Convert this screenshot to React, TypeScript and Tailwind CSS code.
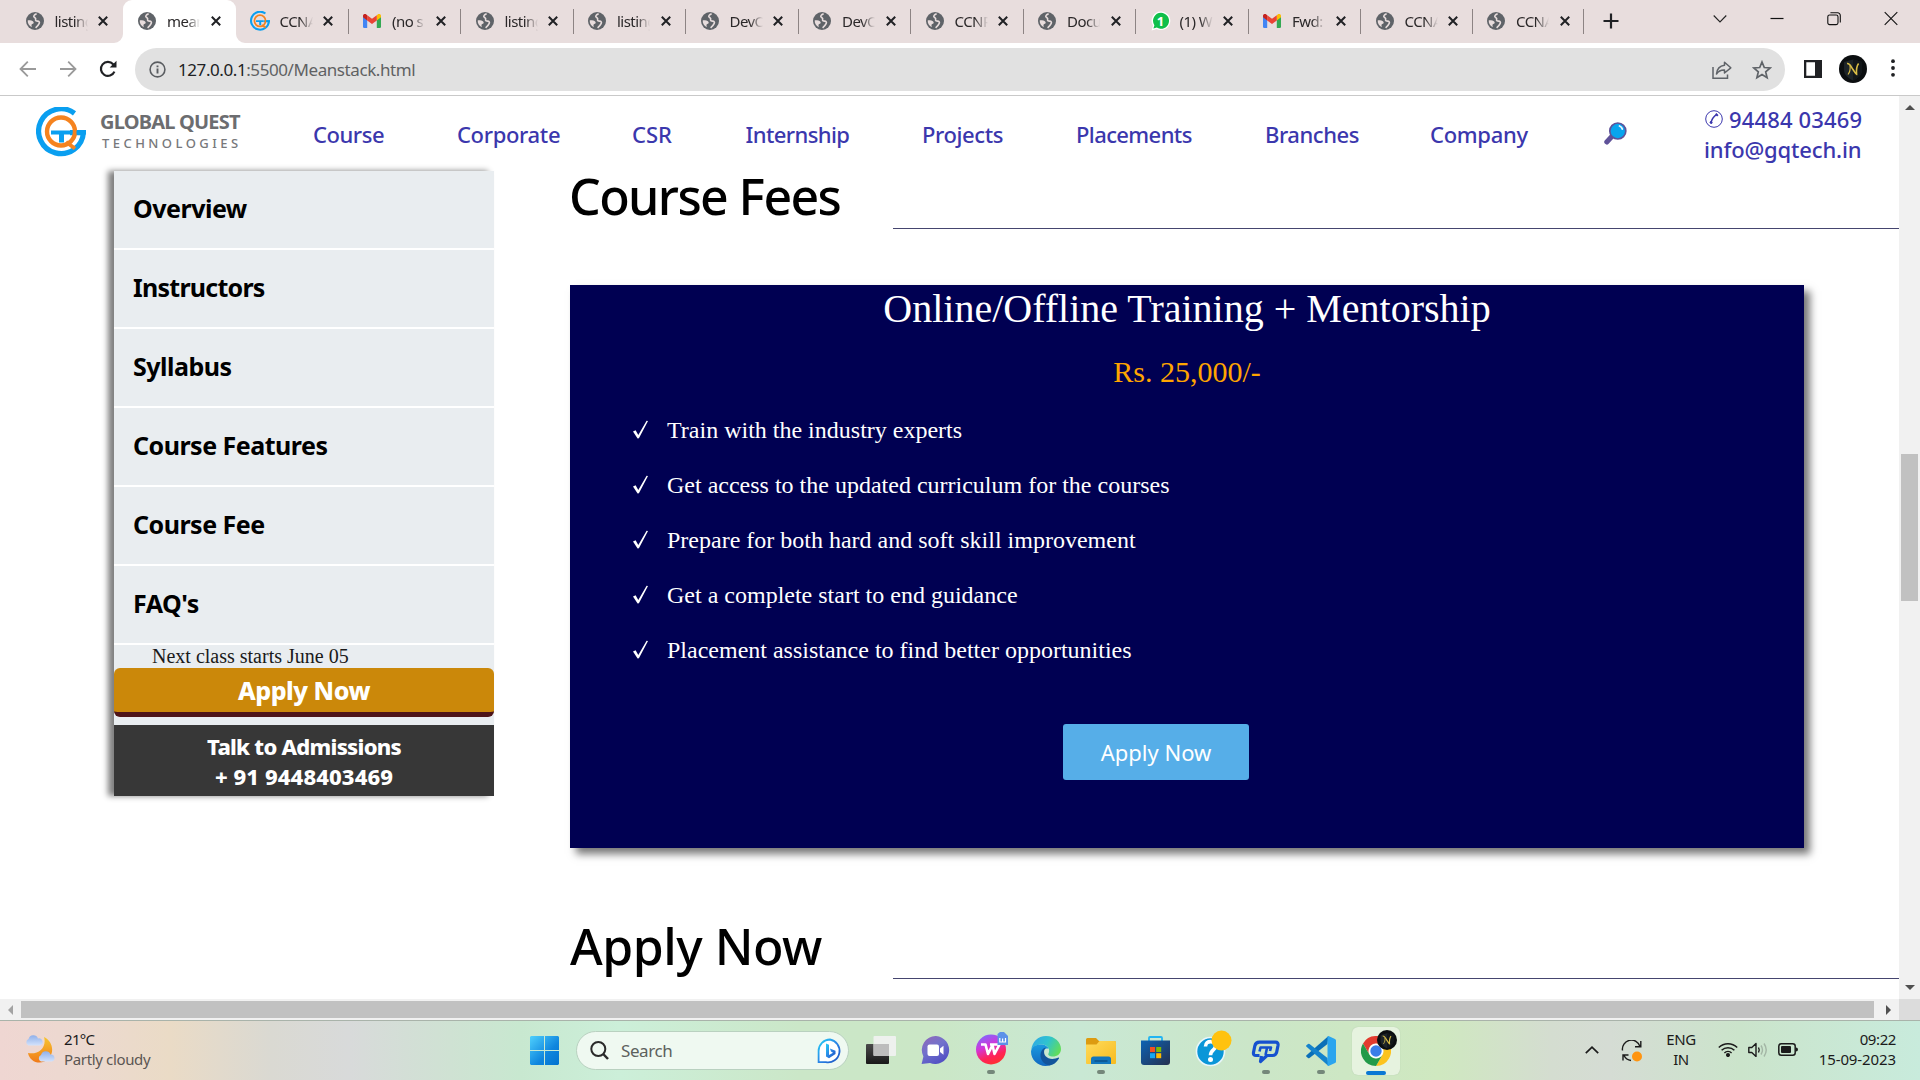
import React from "react";

type IconProps = { className?: string };

function GlobeIcon({ className }: IconProps) {
  return (
    <svg viewBox="0 0 18 18" className={className}>
      <circle cx="9" cy="9" r="9" fill="#5f6368" />
      <path d="M1.7 8.4 C3.6 8.2 6.4 8.6 7.4 9.8 C8.2 10.8 7.4 11.8 6.2 12 C5.2 12.3 5.400 13.6 5.8 15.2 C3.2 13.8 1.6 11.4 1.7 8.4 Z" fill="#e8dddd" />
      <path d="M10.6 1.9 C8.2 2.4 7.200 4.2 8.2 5.2 C9.400 6 10.2 6.200 9.600 7.6 C9.200 8.8 10.4 9.100 11.6 9.100 C13.2 9.200 13.8 10.2 13.200 11.4 C12.6 12.6 12 14 9.6 15.900" fill="none" stroke="#e8dddd" strokeWidth="1.6" />
    </svg>
  );
}

function GqMark({ className }: IconProps) {
  return (
    <svg viewBox="0 0 50 50" className={className}>
      <path d="M38.5 6.3 A22.4 22.4 0 1 0 47.4 25.6 H34" fill="none" stroke="#0a9ff0" strokeWidth="5.2" />
      <circle cx="25" cy="24.5" r="14" fill="none" stroke="#f5831f" strokeWidth="4.4" />
      <path d="M30 35 L39 41.500" stroke="#f5831f" strokeWidth="4" />
      <path d="M15 25.400 H34 M40.500 25.400 H50" stroke="#0a9ff0" strokeWidth="4" />
      <path d="M25.500 26 V35.500" stroke="#0a9ff0" strokeWidth="5" />
    </svg>
  );
}

function GmailIcon({ className }: IconProps) {
  return (
    <svg viewBox="0 0 18 14" className={className}>
      <path d="M0 2.5 V12.8 A1.2 1.2 0 0 0 1.2 14 H4.2 V5.6 Z" fill="#4285f4" />
      <path d="M18 2.5 V12.8 A1.2 1.2 0 0 1 16.8 14 H13.8 V5.6 Z" fill="#34a853" />
      <path d="M13.8 1.2 V6.4 L18 3.2 V1.8 C18 .2 16.2 -.6 15 .3 Z" fill="#fbbc04" />
      <path d="M4.2 6.4 V1.2 L9 4.8 L13.8 1.2 V6.4 L9 10 Z" fill="#ea4335" />
      <path d="M0 1.8 V3.2 L4.2 6.4 V1.2 L3 .3 C1.8 -.6 0 .2 0 1.8 Z" fill="#c5221f" />
    </svg>
  );
}

function WhatsAppIcon({ className }: IconProps) {
  return (
    <div className={`relative ${className ?? ""}`}>
      <svg viewBox="0 0 20 20" className="size-full">
        <path d="M10 .5 A9.3 9.3 0 1 1 5.6 18 L.6 19.4 L2 14.6 A9.3 9.3 0 0 1 10 .5 Z" fill="#fff" />
        <path d="M10 1.8 A8 8 0 1 1 5.8 16.6 L2.4 17.6 L3.4 14.2 A8 8 0 0 1 10 1.8 Z" fill="#0fbf4a" />
      </svg>
      <span className="absolute inset-0 text-center text-[13px] leading-[20px] font-bold text-white">1</span>
    </div>
  );
}

function TabClose() {
  return (
    <svg viewBox="0 0 10 10" className="size-[10px] shrink-0">
      <path d="M.8 .8 L9.2 9.2 M9.2 .8 L.8 9.2" stroke="#202124" strokeWidth="2" />
    </svg>
  );
}

type TabKind = "globe" | "gq" | "gmail" | "wa";

const tabs: { kind: TabKind; title: string }[] = [
  { kind: "globe", title: "listing" },
  { kind: "globe", title: "mean" },
  { kind: "gq", title: "CCNA" },
  { kind: "gmail", title: "(no s" },
  { kind: "globe", title: "listing" },
  { kind: "globe", title: "listing" },
  { kind: "globe", title: "DevO" },
  { kind: "globe", title: "DevO" },
  { kind: "globe", title: "CCNP" },
  { kind: "globe", title: "Docu" },
  { kind: "wa", title: "(1) W" },
  { kind: "gmail", title: "Fwd:" },
  { kind: "globe", title: "CCNA" },
  { kind: "globe", title: "CCNA" },
];

function TabIcon({ kind }: { kind: TabKind }) {
  if (kind === "gq") return <GqMark className="-ml-px size-[20px]" />;
  if (kind === "gmail") return <GmailIcon className="h-[14px] w-[18px]" />;
  if (kind === "wa") return <WhatsAppIcon className="size-[20px]" />;
  return <GlobeIcon className="size-[18px]" />;
}

function TabStrip() {
  return (
    <div className="flex h-[43px] bg-[#e8dddd] pl-[10.5px]">
      {tabs.map((tab, i) => {
        const active = i === 1;
        return (
          <div
            key={i}
            className={`relative flex shrink-0 items-center pb-px pl-[15px] ${i > 11 ? "w-[111.5px]" : "w-[112.5px]"} ${active ? "rounded-t-[9px] bg-white" : ""}`}
          >
            <div className="flex w-[20px] shrink-0 items-center">
              <TabIcon kind={tab.kind} />
            </div>
            <div className="ml-[9px] w-[33px] overflow-hidden text-[15px] leading-[20px] tracking-[-0.55px] whitespace-nowrap text-[#2b2829] [mask-image:linear-gradient(to_right,black_60%,transparent_100%)]">
              {tab.title}
            </div>
            <div className="ml-[10.5px]">
              <TabClose />
            </div>
            {i > 1 && <div className="absolute top-[9px] -right-[0.5px] h-[25px] w-px bg-[#8d8484]" />}
            {active && (
              <>
                <svg viewBox="0 0 9 9" className="absolute bottom-0 -left-[9px] size-[9px]"><path d="M9 0 V9 H0 A9 9 0 0 0 9 0 Z" fill="#fff" /></svg>
                <svg viewBox="0 0 9 9" className="absolute -right-[9px] bottom-0 size-[9px]"><path d="M0 0 V9 H9 A9 9 0 0 1 0 0 Z" fill="#fff" /></svg>
              </>
            )}
          </div>
        );
      })}
      <svg viewBox="0 0 16 16" className="mt-[13px] ml-[19.5px] size-[16px]"><path d="M8 .5 V15.5 M.5 8 H15.5" stroke="#202124" strokeWidth="2.2" /></svg>
      <div className="mt-[11px] mr-[22px] ml-auto flex items-start gap-[43px]">
        <svg viewBox="0 0 14 16" className="h-[16px] w-[14px]"><path d="M.7 4.5 L7 11 L13.3 4.5" fill="none" stroke="#222" strokeWidth="1.1" /></svg>
        <svg viewBox="0 0 14 16" className="h-[16px] w-[14px]"><path d="M.5 7.5 H13.5" stroke="#111" strokeWidth="1.2" /></svg>
        <svg viewBox="0 0 14 16" className="h-[16px] w-[14px]" fill="none" stroke="#111" strokeWidth="1.1"><rect x=".8" y="4" width="10.2" height="9.6" rx="1.8" /><path d="M3.4 1.8 H10.6 A2.6 2.6 0 0 1 13.3 4.4 V11.4" /></svg>
        <svg viewBox="0 0 14 16" className="h-[16px] w-[14px]"><path d="M.7 1.2 L13.3 13.8 M13.3 1.2 L.7 13.8" stroke="#111" strokeWidth="1.1" /></svg>
      </div>
    </div>
  );
}

function Avatar({ className }: IconProps) {
  return (
    <svg viewBox="0 0 28 28" className={className}>
      <circle cx="14" cy="14" r="14" fill="#0b0e10" />
      <path d="M5 7 L14 4.5 L23 7 V15 C23 20 18.5 23.5 14 25.5 C9.5 23.5 5 20 5 15 Z" fill="#1d2428" />
      <path d="M14 4.5 L23 7 V15 C23 20 18.5 23.5 14 25.5 Z" fill="#12171a" />
      <path d="M8 8.5 C11 8 11.5 11 14 14.5 C16 17.5 17 19.5 17.6 19.5 C17.2 15 17.6 11 19.6 8.5" fill="none" stroke="#d9bd45" strokeWidth="1.6" />
      <path d="M11 10.5 C11.5 14 11 17 9 19.5" fill="none" stroke="#d9bd45" strokeWidth="1.1" />
    </svg>
  );
}

function Toolbar() {
  return (
    <div className="flex h-[53px] items-start border-b border-[#c9c9c9] bg-white pt-[5px]">
      <div className="flex h-[43px] w-[135px] shrink-0 items-center pl-[18.5px]">
        <svg viewBox="0 0 18 18" className="-mt-px size-[18px]" fill="none" stroke="#9a9a9a" strokeWidth="1.8"><path d="M17 9 H1.6 M8.8 1.6 L1.5 9 L8.8 16.4" /></svg>
        <svg viewBox="0 0 18 18" className="-mt-px ml-[22px] size-[18px]" fill="none" stroke="#9a9a9a" strokeWidth="1.8"><path d="M1 9 H16.4 M9.2 1.6 L16.5 9 L9.2 16.4" /></svg>
        <svg viewBox="0 0 18 18" className="-mt-px ml-[22px] size-[18px]"><path d="M15.4 11.6 A7 7 0 1 1 14.2 4.3 L16 6.1" fill="none" stroke="#202124" strokeWidth="2.2" /><path d="M17.5 .8 V7.6 H10.7 Z" fill="#202124" /></svg>
      </div>
      <div className="flex h-[43px] w-[1650px] shrink-0 items-center rounded-full bg-[#e1e1e1] pl-[14px]">
        <svg viewBox="0 0 17 17" className="size-[17px]"><circle cx="8.5" cy="8.5" r="7.4" fill="none" stroke="#5a5d61" strokeWidth="1.6" /><path d="M8.5 7.5 V12.5 M8.5 4.4 V6.2" stroke="#5a5d61" strokeWidth="1.9" /></svg>
        <div className="ml-[12px] text-[17px] leading-[24px] tracking-[-0.42px] text-[#5f6163]">
          <span className="text-[#202124]">127.0.0.1</span>:5500/Meanstack.html
        </div>
        <svg viewBox="0 0 20 20" className="ml-auto size-[20px]" fill="none" stroke="#5f6368" strokeWidth="1.5"><path d="M1 7 V18.2 H15.5 V14.5" /><path d="M12.5 2.2 L18.8 7.8 L12.5 13 V10 C9 9.8 6.5 11 4.5 14 C5 9 8 5.8 12.5 5.3 Z" strokeLinejoin="round" /></svg>
        <svg viewBox="0 0 20 20" className="mr-[13px] ml-[20px] size-[20px]"><path d="M10 2 L12.3 7.5 L18.2 8 L13.7 11.9 L15.1 17.7 L10 14.6 L4.9 17.7 L6.3 11.9 L1.8 8 L7.7 7.5 Z" fill="none" stroke="#5f6368" strokeWidth="1.7" /></svg>
      </div>
      <svg viewBox="0 0 18 18" className="mt-[12px] ml-[19px] size-[18px]"><path d="M0 0 H18 V18 H0 Z M2.3 2.3 V15.7 H11 V2.3 Z" fill="#202124" fillRule="evenodd" /></svg>
      <Avatar className="mt-[7px] ml-[17px] size-[28px]" />
      <svg viewBox="0 0 4 18" className="mt-[11px] ml-[23.5px] h-[18px] w-[4px]" fill="#202124"><circle cx="2" cy="2.2" r="1.9" /><circle cx="2" cy="9" r="1.9" /><circle cx="2" cy="15.8" r="1.9" /></svg>
    </div>
  );
}

const navItems = [
  { label: "Course", cls: "w-[144px] tracking-[-0.45px]" },
  { label: "Corporate", cls: "w-[175px] tracking-[-0.35px]" },
  { label: "CSR", cls: "w-[113.5px] tracking-[0px]" },
  { label: "Internship", cls: "w-[176.5px] tracking-[-0.6px]" },
  { label: "Projects", cls: "w-[154px] tracking-[-0.4px]" },
  { label: "Placements", cls: "w-[189px] tracking-[-0.6px]" },
  { label: "Branches", cls: "w-[165px] tracking-[-0.45px]" },
  { label: "Company", cls: "w-[174px] tracking-[-0.3px]" },
];

function SiteHeader() {
  return (
    <div className="relative flex h-[75px] shrink-0 items-center text-[22px] leading-[30px] font-medium text-[#3b37ad]">
      <GqMark className="-mt-[4px] ml-[36px] size-[50px] shrink-0" />
      <div className="-mt-[7px] ml-[14px] w-[213px] shrink-0 whitespace-nowrap">
        <div className="text-[20px] leading-[25px] font-bold tracking-[-0.8px] text-[#6c6d70]">GLOBAL QUEST</div>
        <div className="pl-[2px] text-[13px] leading-[18px] font-medium tracking-[3.45px] text-[#77787b]">TECHNOLOGIES</div>
      </div>
      {navItems.map((n) => (
        <a key={n.label} className={`shrink-0 ${n.cls}`}>{n.label}</a>
      ))}
      <svg viewBox="0 0 23 23" className="size-[23px] shrink-0">
        <path d="M2.8 20 L8.5 13.8" stroke="#5f5299" strokeWidth="5" strokeLinecap="round" />
        <circle cx="13.8" cy="9" r="8" fill="#08a4ee" stroke="#5f5299" strokeWidth="1.7" />
        <path d="M15.5 4 C17 4.6 18 5.6 18.3 7" fill="none" stroke="#e8f6ff" strokeWidth="1.8" strokeLinecap="round" />
      </svg>
      <div className="ml-[77px] shrink-0 whitespace-nowrap">
        <div className="flex items-center">
          <svg viewBox="0 0 18 18" className="ml-px size-[18px]" fill="none" stroke="#3b37ad"><circle cx="9" cy="9" r="8.3" strokeWidth="1" /><path d="M5.8 13.6 C6.5 9.5 8.6 6.4 12 4.4" strokeWidth="1.6" /><path d="M4.9 11.8 L7.3 13.2 M10.8 3.6 L12.8 5.8" strokeWidth="2" /></svg>
          <span className="ml-[6px] tracking-[0.15px]">94484 03469</span>
        </div>
        <div className="tracking-[-0.15px]">info@gqtech.in</div>
      </div>
    </div>
  );
}

const sections = ["Overview", "Instructors", "Syllabus", "Course Features", "Course Fee", "FAQ's"];

function Sidebar() {
  return (
    <div className="ml-[114px] h-[625px] w-[380px] shrink-0 bg-[#e9edf0] shadow-[-6px_0_6px_#808080]">
      {sections.map((s) => (
        <div key={s} className={`h-[79px] border-b-2 border-white pl-[19px] text-[25px] leading-[75px] font-bold text-black ${s === "Instructors" ? "tracking-[-0.75px]" : "tracking-[-0.5px]"}`}>{s}</div>
      ))}
      <div className="pl-[38px] font-['Liberation_Serif',serif] text-[20px] leading-[23px] text-[#1a1a1a]">Next class starts June 05</div>
      <div className="h-[49px] rounded-[6px] border-b-[5px] border-[#4d1418] bg-[#cb880a] text-center text-[25px] leading-[44px] font-extrabold tracking-[-0.5px] text-white">Apply Now</div>
      <div className="mt-[8px] h-[71px] bg-[#373737] pt-[6px] text-center text-[22px] leading-[30px] font-extrabold text-white">
        <div className="tracking-[-0.75px]">Talk to Admissions</div>
        <div className="tracking-[0.1px]">+ 91 9448403469</div>
      </div>
    </div>
  );
}

const perks = [
  "Train with the industry experts",
  "Get access to the updated curriculum for the courses",
  "Prepare for both hard and soft skill improvement",
  "Get a complete start to end guidance",
  "Placement assistance to find better opportunities",
];

function SectionHeading({ title, cls }: { title: string; cls: string }) {
  return (
    <div className="flex h-[68px]">
      <h2 className={`w-[323px] shrink-0 text-[50px] leading-[70px] font-medium whitespace-nowrap text-black ${cls}`}>{title}</h2>
      <div className="h-px flex-1 self-end bg-[#45456f]" />
    </div>
  );
}

function MainColumn() {
  return (
    <div className="-mt-[10px] ml-[76px] flex-1">
      <SectionHeading title="Course Fees" cls="-indent-[1px] tracking-[-1.6px]" />
      <div className="mt-[56px] h-[563px] w-[1234px] bg-[#000052] font-['Liberation_Serif',serif] text-white shadow-[6px_6px_8px_#777]">
        <div className="text-center text-[40px] leading-[47px]">Online/Offline Training + Mentorship</div>
        <div className="mt-[22px] text-center text-[30px] leading-[35px] text-[#ffa500]">Rs. 25,000/-</div>
        <ul className="mt-[28px] flex flex-col gap-[28px] pl-[62px] text-[24px] leading-[27px]">
          {perks.map((p) => (
            <li key={p} className="flex items-center">
              <svg viewBox="0 0 17 19" className="-mt-[3px] h-[19px] w-[17px]"><path d="M1 11.5 L3.6 10.2 L6.3 15 L14.6 .8 L16 1 L6.9 18.2 L5.6 18.4 Z" fill="#fff" /></svg>
              <span className="ml-[18px]">{p}</span>
            </li>
          ))}
        </ul>
        <button className="mt-[60px] ml-[493px] block h-[56px] w-[186px] rounded-[3px] bg-[#56aee8] font-['Noto_Sans',sans-serif] text-[22px] leading-[57px]">Apply Now</button>
      </div>
      <div className="h-[63px]" />
      <SectionHeading title="Apply Now" cls="tracking-[-0.5px]" />
    </div>
  );
}

function Dot() {
  return <div className="absolute bottom-[6px] left-1/2 h-[4px] w-[8px] -translate-x-1/2 rounded-full bg-[#74877a]" />;
}

function Cell({ children, dot }: { children: React.ReactNode; dot?: boolean }) {
  return (
    <div className="relative flex h-full w-[55px] shrink-0 items-center justify-center">
      {children}
      {dot && <Dot />}
    </div>
  );
}

function Taskbar() {
  return (
    <div className="flex h-[60px] items-center border-t border-[#a9b3aa] bg-[linear-gradient(to_right,#efd6d2_0px,#ecd9cf_90px,#eadbc6_170px,#dad9d2_270px,#d8dada_350px,#cfe2d3_450px,#c8e8d0_520px,#ccefd9_620px,#cbe7c8_800px,#cbe7c6_930px,#c9e8d4_1080px,#cbe6c8_1250px,#cfe8c0_1440px,#d4ddd0_1550px,#d5dcd4_1610px,#cbe4cb_1740px,#c8ebdc_1920px)] text-[15px] text-[#1b1b1b]">
      <div className="flex w-[517px] shrink-0 items-center pl-[25px]">
        <svg viewBox="0 0 30 30" className="-mt-[4px] size-[30px]">
          <defs>
            <linearGradient id="moon" x1="0" y1="0" x2="0" y2="1"><stop offset="0" stopColor="#f7c52e" /><stop offset="1" stopColor="#f07a1a" /></linearGradient>
            <linearGradient id="cloud" x1="0" y1="0" x2="0" y2="1"><stop offset="0" stopColor="#8fb0ea" /><stop offset="1" stopColor="#d3e2fb" /></linearGradient>
          </defs>
          <path d="M19 3 C27 7 30 17 24 24 C17 32 5 29 3 19 C14 21 22 13 19 3 Z" fill="url(#moon)" />
          <path d="M3.5 11.5 A3.500 3.500 0 0 1 3.5 5 A5 5 0 0 1 13 4.5 A3.6 3.6 0 0 1 15 11.5 Z" fill="url(#cloud)" />
          <path d="M16 27.5 A3.5 3.5 0 0 1 16 21 A5 5 0 0 1 25.5 20.5 A3.6 3.6 0 0 1 27 27.5 Z" fill="url(#cloud)" />
        </svg>
        <div className="-mt-[4px] ml-[9px] leading-[20px]">
          <div className="tracking-[-0.7px]">21°C</div>
          <div className="tracking-[-0.35px] text-[#5b5653]">Partly cloudy</div>
        </div>
      </div>
      <Cell>
        <svg viewBox="0 0 29 29" className="size-[29px]">
          <defs><linearGradient id="win" x1="0" y1="0" x2="1" y2="1"><stop offset="0" stopColor="#4fd0fd" /><stop offset=".6" stopColor="#0f86de" /><stop offset="1" stopColor="#0272cf" /></linearGradient></defs>
          <path d="M1 0 H14 V14 H0 V1 Z M15 0 H28 L29 1 V14 H15 Z M0 15 H14 V29 H1 L0 28 Z M15 15 H29 V28 L28 29 H15 Z" fill="url(#win)" />
        </svg>
      </Cell>
      <div className="mr-[4px] ml-[4px] flex h-[39px] w-[273px] shrink-0 items-center rounded-full border border-[#b9d1c0] bg-[#eff9f1] pl-[13px] text-[17px] text-[#5c615d]">
        <svg viewBox="0 0 19 19" className="size-[19px]" fill="none" stroke="#2a2a2a" strokeWidth="2"><circle cx="8.3" cy="8" r="7" /><path d="M13.2 13 L18 18" strokeWidth="2.5" /></svg>
        <span className="ml-[12px] tracking-[-0.4px]">Search</span>
        <svg viewBox="0 0 26 26" className="mr-[5px] ml-auto size-[26px]">
          <defs><linearGradient id="bing" x1="0" y1="0" x2="1" y2="1"><stop offset="0" stopColor="#25d0f5" /><stop offset=".5" stopColor="#2a85e6" /><stop offset="1" stopColor="#1a4fc0" /></linearGradient></defs>
          <path d="M13 1.5 A11.5 11.5 0 1 1 9 24.2 H1.6 V13 A11.5 11.5 0 0 1 13 1.5 Z" fill="#fff" stroke="url(#bing)" strokeWidth="1.8" />
          <path d="M9 5.5 L12 6.7 V17 L16 14.8 L14 13.5 L12.9 10.5 L18.5 12.8 V16 L12 20.3 L9 18.5 Z" fill="url(#bing)" />
        </svg>
      </div>
      <Cell>
        <svg viewBox="0 0 30 28" className="-mt-[2px] h-[28px] w-[30px]">
          <defs><linearGradient id="tv" x1="0" y1="0" x2="0" y2="1"><stop offset="0" stopColor="#4a4a4a" /><stop offset="1" stopColor="#191919" /></linearGradient></defs>
          <rect y="8" width="23" height="20" rx="1" fill="url(#tv)" />
          <rect x="7.5" width="22.5" height="20" rx="1" fill="#f2f2f2" opacity=".9" />
          <path d="M7.5 8 H23 V20 H8.5 Q7.5 20 7.5 19 Z" fill="#bdbdbd" />
        </svg>
      </Cell>
      <Cell>
        <svg viewBox="0 0 29 28" className="-mt-[2px] h-[28px] w-[29px]">
          <defs><linearGradient id="chat" x1="0" y1="0" x2=".6" y2="1"><stop offset="0" stopColor="#9467b8" /><stop offset=".5" stopColor="#7272cc" /><stop offset="1" stopColor="#5350c4" /></linearGradient></defs>
          <path d="M15 0 A14 14 0 1 1 9 27 L.6 28 L2.4 20.5 A14 14 0 0 1 15 0 Z" fill="url(#chat)" />
          <rect x="6.5" y="8.5" width="11.5" height="11.5" rx="2" fill="#fff" />
          <path d="M19 12.5 L22.500 9.8 V18.8 L19 16 Z" fill="#fff" />
        </svg>
      </Cell>
      <Cell dot>
        <svg viewBox="0 0 32 33" className="mb-[4px] ml-[2px] h-[33px] w-[32px]">
          <defs><linearGradient id="wps" x1=".2" y1="0" x2=".6" y2="1"><stop offset="0" stopColor="#7c6bff" /><stop offset=".4" stopColor="#d236d8" /><stop offset=".75" stopColor="#ff2358" /><stop offset="1" stopColor="#ff3030" /></linearGradient></defs>
          <circle cx="15" cy="17.5" r="15" fill="url(#wps)" />
          <path d="M5 12.5 H9.5 L12 22 L16.5 13 L18.500 22 L23.500 12.5 H14" fill="none" stroke="#fff" strokeWidth="2.6" strokeLinejoin="round" />
          <path d="M21.5 2 L24 0 H28 L32 4 V13 H21.5 Z" fill="#5c91e8" />
          <path d="M23.8 6 V10 H29.5 V6 M26.6 6.5 V10" fill="none" stroke="#fff" strokeWidth="1.2" />
        </svg>
      </Cell>
      <Cell>
        <svg viewBox="0 0 30 30" className="size-[30px]">
          <defs>
            <linearGradient id="edgeTop" x1="0" y1=".2" x2="1" y2=".6"><stop offset="0" stopColor="#2fa8e6" /><stop offset=".5" stopColor="#2fc3cf" /><stop offset="1" stopColor="#62dd5a" /></linearGradient>
            <linearGradient id="edgeMid" x1="0" y1="0" x2="0" y2="1"><stop offset="0" stopColor="#1a9be0" /><stop offset="1" stopColor="#1168c0" /></linearGradient>
          </defs>
          <path d="M.3 14 C1 6 7 0 15 0 C24 0 30 6.5 30 13 C30 18 26 20.5 22 20.5 C18.5 20.5 16.5 19 17.5 17.5 C19.5 14 17 9.5 12 8.6 C7 7.8 2 10 .3 14 Z" fill="url(#edgeTop)" />
          <path d="M0 15.5 C.5 10.5 6 7.8 11.5 8.6 C14.5 9 16.5 10.6 17.6 12.5 C13.5 11.8 10.5 15 11 19.5 C11.6 24.5 16 29 19.5 29 C10 32.5 0 25.5 0 15.5 Z" fill="url(#edgeMid)" />
          <path d="M9.5 18.5 C10 14.5 12.5 11.8 15 11.6 C11.5 15 13 20.5 17.5 22.3 C21 23.6 24.5 22.8 27.6 21.6 C28 21.5 28.2 22 28 22.4 C25.5 26.5 22 29 18.5 29.5 C13.5 29 9 24 9.5 18.5 Z" fill="#12559c" />
        </svg>
      </Cell>
      <Cell dot>
        <svg viewBox="0 0 30 26" className="h-[26px] w-[30px]">
          <defs><linearGradient id="folder" x1="0" y1="0" x2="1" y2="1"><stop offset="0" stopColor="#ffdb5c" /><stop offset="1" stopColor="#f7bb1e" /></linearGradient></defs>
          <path d="M0 1.5 Q0 0 1.5 0 H10 L13 3 H28.5 Q30 3 30 4.5 V12 H0 Z" fill="#dd9b10" />
          <path d="M0 6.5 H10.500 L13.5 3 H28.5 Q30 3 30 4.5 V25 Q30 26 29 26 H1 Q0 26 0 25 Z" fill="url(#folder)" />
          <path d="M5 26 V21 Q5 18.5 7.5 18.5 H22.5 Q25 18.5 25 21 V26 Z" fill="#1276bd" />
          <path d="M8.5 23 H21.5" stroke="#0a4c82" strokeWidth="1.3" />
        </svg>
      </Cell>
      <Cell>
        <svg viewBox="0 0 29 29" className="size-[29px]">
          <defs><linearGradient id="store" x1="0" y1="0" x2="1" y2="1"><stop offset="0" stopColor="#0d63b4" /><stop offset="1" stopColor="#25304f" /></linearGradient></defs>
          <path d="M8 5.5 V2 Q8 1 9 1 H20 Q21 1 21 2 V5.5" fill="none" stroke="#22b4f2" strokeWidth="1.8" />
          <path d="M0 4.5 H29 V26 Q29 29 26 29 H3 Q0 29 0 26 Z" fill="url(#store)" />
          <path d="M9 11 H14 V16 H9 Z" fill="#f25022" /><path d="M15.2 11 H20.2 V16 H15.2 Z" fill="#7fba00" />
          <path d="M9 17.2 H14 V22.2 H9 Z" fill="#14a7f0" /><path d="M15.2 17.2 H20.2 V22.2 H15.2 Z" fill="#ffb900" />
        </svg>
      </Cell>
      <Cell>
        <svg viewBox="0 0 38 38" className="mb-[5px] ml-[6px] size-[38px] shrink-0">
          <circle cx="15.5" cy="22.5" r="14" fill="#0a96d8" stroke="#e9f6fa" strokeWidth="1.6" />
          <path d="M10.5 17.5 C10.5 10.5 21 11.5 20.5 17.5 C20.2 21 15.5 21 15.5 26.2" fill="none" stroke="#fff" strokeWidth="3.6" />
          <circle cx="15.5" cy="30.5" r="2.5" fill="#fff" />
          <circle cx="26.5" cy="11.5" r="10" fill="#ffc20f" />
        </svg>
      </Cell>
      <Cell dot>
        <svg viewBox="0 0 29 24" className="mt-[2px] h-[24px] w-[29px]" fill="none" strokeLinejoin="round">
          <path d="M8.5 15.5 H5 Q2 15.5 2.5 12.5 L3.8 6 Q4.6 2.2 8.5 2.2 H24.5 Q27.5 2.2 27 5.5 L25.7 12 Q25 15.5 21.5 15.5 H16 L9.5 21.5 L10.5 16" stroke="#1551cf" strokeWidth="3.2" />
          <path d="M8.5 11.5 L9.5 7.5 H20 L19 11 M16 8 L14.5 15" stroke="#1551cf" strokeWidth="2.6" />
        </svg>
      </Cell>
      <Cell dot>
        <svg viewBox="0 0 30 30" className="size-[30px]">
          <path d="M22.5 0 L21.5 8 L3.5 22 Q2.8 22.5 2 22 L.5 20.7 Q-.3 20 .5 19.2 Z" fill="#0a6fb8" />
          <path d="M22.5 30 L21.5 22 L3.5 8 Q2.8 7.5 2 8 L.5 9.3 Q-.3 10 .5 10.8 Z" fill="#1583cc" />
          <path d="M22.5 0 L29 3 Q30 3.5 30 4.6 V25.4 Q30 26.5 29 27 L22.5 30 Q21 30 21.5 28 V2 Q21 0 22.5 0 Z" fill="#2ba5ee" />
        </svg>
      </Cell>
      <Cell>
        <div className="relative flex size-[48px] items-center justify-center rounded-[6px] bg-[#e6f3df] shadow-[0_0_1px_#a9bfa5]">
          <svg viewBox="-15 -15 30 30" className="size-[30px]">
            <path d="M-13 -7.5 A15 15 0 0 1 13 -7.5 H0 A7.5 7.5 0 0 0 -6.5 3.75 Z" fill="#e23b2e" />
            <path d="M13 -7.5 A15 15 0 0 1 0 15 L6.5 3.75 A7.5 7.5 0 0 0 0 -7.5 Z" fill="#fcc31e" />
            <path d="M0 15 A15 15 0 0 1 -13 -7.5 L-6.5 3.75 A7.5 7.5 0 0 0 6.5 3.75 Z" fill="#229a48" />
            <circle r="7.2" fill="#fff" /><circle r="5.7" fill="#3a7de8" />
          </svg>
          <Avatar className="absolute top-[3px] right-[3px] size-[20px]" />
          <div className="absolute bottom-0 left-[14px] h-[4px] w-[20px] rounded-full bg-[#0a78d4]" />
        </div>
      </Cell>
      <div className="mr-[24px] ml-auto flex h-full items-center">
        <svg viewBox="0 0 14 8" className="-mt-[2px] h-[8px] w-[14px]"><path d="M.8 7.2 L7 1.2 L13.2 7.2" fill="none" stroke="#1b1b1b" strokeWidth="1.7" /></svg>
        <svg viewBox="0 0 22 22" className="ml-[22px] size-[22px]" fill="none" stroke="#1b1b1b" strokeWidth="1.4">
          <path d="M1.5 10.5 A9 9 0 0 1 19 6.5 M19.8 1 V6.8 H14" /><path d="M10 20.5 A9 9 0 0 1 3 15.5 M2 20.5 V15 H7.5" />
          <circle cx="16" cy="16.5" r="5" fill="#ff9410" stroke="none" />
        </svg>
        <div className="-mt-[3px] ml-[20px] w-[36px] text-center leading-[20px] tracking-[-0.4px]"><div>ENG</div><div>IN</div></div>
        <svg viewBox="0 0 20 15" className="-mt-[2px] ml-[19px] h-[15px] w-[20px]" fill="none" stroke="#1b1b1b" strokeWidth="1.5"><path d="M.8 5.5 A13 13 0 0 1 19.2 5.5" /><path d="M3.6 8.3 A9 9 0 0 1 16.4 8.3" /><path d="M6.4 11 A5.2 5.2 0 0 1 13.6 11" /><circle cx="10" cy="13" r="1.3" fill="#1b1b1b" /></svg>
        <svg viewBox="0 0 20 16" className="-mt-[2px] ml-[10px] h-[16px] w-[20px]" fill="none" stroke="#1b1b1b" strokeWidth="1.4"><path d="M.8 5.5 H3.8 L8 1.6 V14.4 L3.8 10.5 H.8 Z" strokeLinejoin="round" /><path d="M10.5 5.5 Q12 8 10.5 10.5" /><path d="M13 3.5 Q16 8 13 12.5 M16 1.5 Q20.5 8 16 14.5" stroke="#a3b5a5" /></svg>
        <svg viewBox="0 0 20 13" className="-mt-[2px] ml-[10px] h-[13px] w-[20px]"><rect x=".8" y=".8" width="16.4" height="11.4" rx="2.5" fill="none" stroke="#1b1b1b" strokeWidth="1.5" /><rect x="3" y="3" width="10" height="7" rx="1" fill="#1b1b1b" /><path d="M18 4.5 Q20 4.5 20 6.5 Q20 8.5 18 8.5 Z" fill="#1b1b1b" /></svg>
        <div className="-mt-[4px] ml-[19px] w-[79px] text-right leading-[20px] whitespace-nowrap"><div className="tracking-[-0.4px]">09:22</div><div className="tracking-[-0.1px]">15-09-2023</div></div>
      </div>
    </div>
  );
}

export default function App() {
  return (
    <div className="flex h-[1080px] w-[1920px] flex-col overflow-hidden bg-white font-['Noto_Sans',sans-serif]">
      <TabStrip />
      <Toolbar />
      <div className="flex h-[903px]">
        <div className="flex w-[1899px] flex-col overflow-hidden">
          <SiteHeader />
          <div className="flex flex-1">
            <Sidebar />
            <MainColumn />
          </div>
        </div>
        <div className="flex w-[21px] flex-col items-center bg-[#f1f1f1] pt-[9px]">
          <svg viewBox="0 0 10 5" className="h-[5px] w-[10px]"><path d="M0 5 L5 0 L10 5 Z" fill="#505050" /></svg>
          <div className="mt-[344px] h-[147px] w-[17px] bg-[#c1c1c1]" />
          <svg viewBox="0 0 10 5" className="mt-[384px] h-[5px] w-[10px]"><path d="M0 0 L5 5 L10 0 Z" fill="#505050" /></svg>
        </div>
      </div>
      <div className="flex h-[21px] items-center bg-[#f1f1f1]">
        <svg viewBox="0 0 5 10" className="ml-[8px] h-[10px] w-[5px]"><path d="M5 0 L0 5 L5 10 Z" fill="#a3a3a3" /></svg>
        <div className="ml-[8px] h-[17px] w-[1853px] bg-[#c1c1c1]" />
        <svg viewBox="0 0 5 10" className="ml-[12px] h-[10px] w-[5px]"><path d="M0 0 L5 5 L0 10 Z" fill="#505050" /></svg>
        <div className="ml-auto h-full w-[21px] bg-[#dcdcdc]" />
      </div>
      <Taskbar />
    </div>
  );
}
